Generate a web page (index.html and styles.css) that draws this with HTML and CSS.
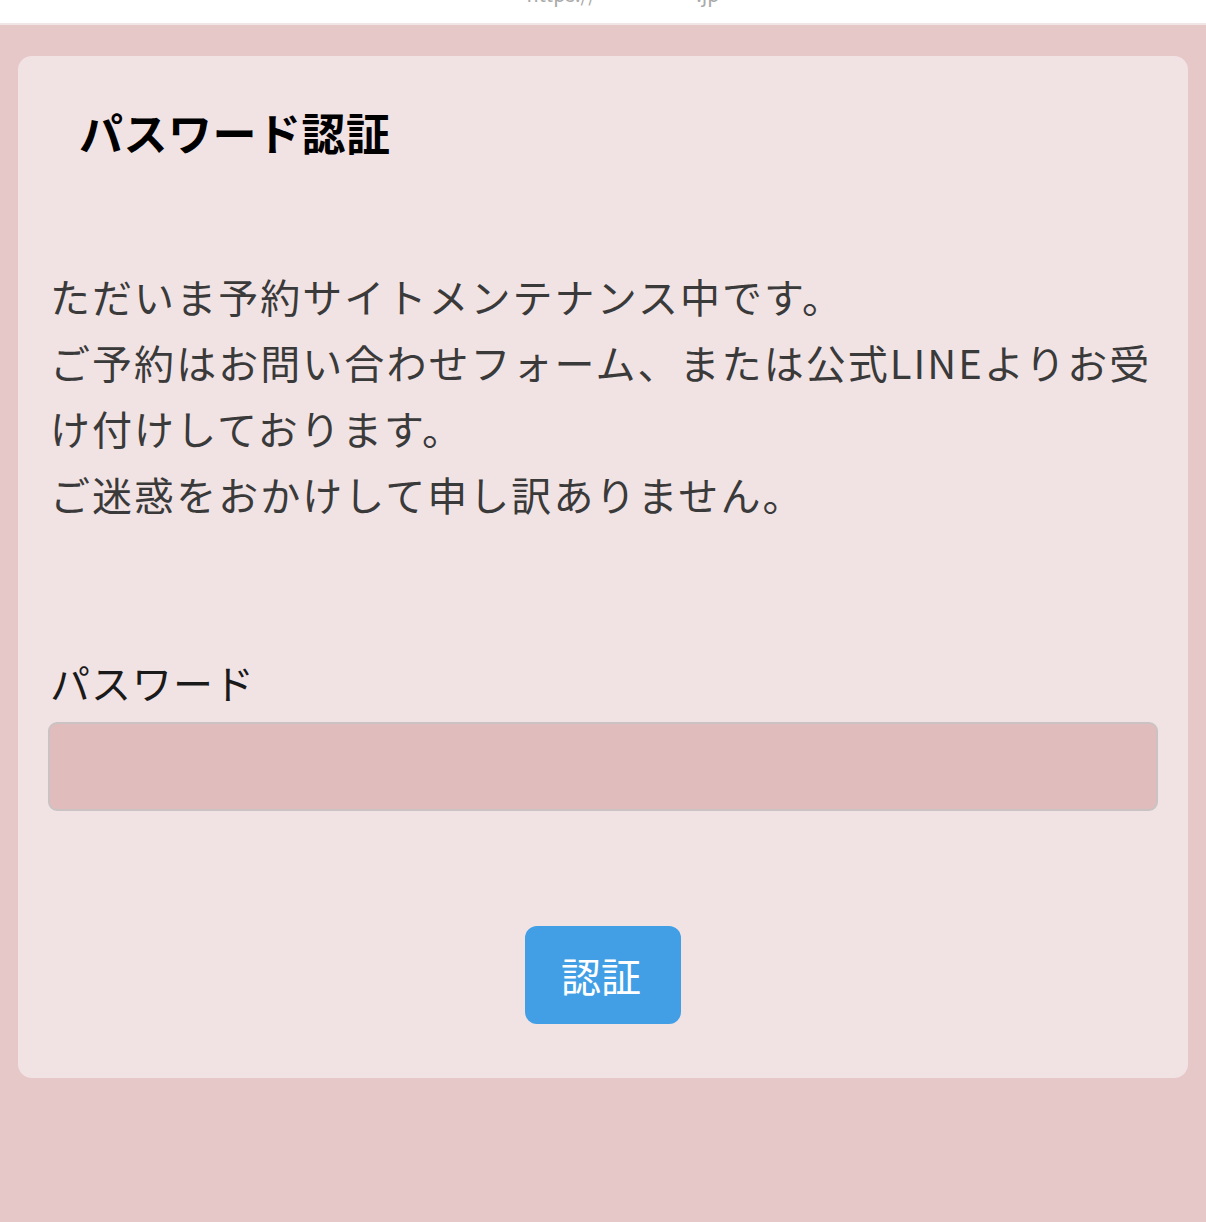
FILE: index.html
```html
<!DOCTYPE html>
<html lang="ja">
<head>
<meta charset="utf-8">
<title>パスワード認証</title>
<link rel="stylesheet" href="styles.css">
</head>
<body>
<div class="topbar"><span class="url">https://・・・・・.jp</span></div>
<main class="page">
  <section class="card">
    <h1 class="title">パスワード認証</h1>
    <p class="message">ただいま予約サイトメンテナンス中です。<br>ご予約はお問い合わせフォーム、または公式LINEよりお受け付けしております。<br>ご迷惑をおかけして申し訳ありません。</p>
    <form class="form">
      <label class="label" for="pw">パスワード</label>
      <input class="input" id="pw" type="password">
      <div class="actions">
        <button class="button" type="button">認証</button>
      </div>
    </form>
  </section>
</main>
</body>
</html>
```

FILE: styles.css
```css
html, body {
  margin: 0;
  padding: 0;
}
body {
  background: #e7c8c9;
  font-family: "Noto Sans CJK JP", "Noto Sans", sans-serif;
  width: 1206px;
  height: 1222px;
  overflow: hidden;
}
.topbar {
  height: 23px;
  background: #ffffff;
  border-bottom: 2px solid #f1e6e6;
  overflow: hidden;
  text-align: center;
  padding-left: 40px;
}
.url {
  display: block;
  font-size: 20px;
  line-height: 20px;
  color: #aaa;
  margin-top: -16px;
}
.page {
  padding: 31px 18px 0 18px;
}
.card {
  background: #f1e3e4;
  border-radius: 14px;
  padding: 46px 30px 54px 32px;
}
.title {
  margin: 0;
  padding-left: 29px;
  font-size: 44px;
  line-height: 60px;
  font-weight: 700;
  color: #000;
  letter-spacing: 0.5px;
}
.message {
  margin: 101px 0 0 0;
  font-size: 40px;
  line-height: 66px;
  letter-spacing: 2.05px;
  color: #3a3a3a;
  font-weight: 400;
}
.form {
  margin-top: 127px;
  display: flex;
  flex-direction: column;
}
.label {
  font-size: 40px;
  line-height: 56px;
  letter-spacing: 1px;
  color: #1a1a1a;
}
.input {
  margin: 12px 0 0 -2px;
  height: 89px;
  box-sizing: border-box;
  background: #e0bcbd;
  border: 2px solid #cbc3c3;
  border-radius: 9px;
  outline: none;
  padding: 0 16px;
}
.actions {
  margin-top: 115px;
  display: flex;
  justify-content: center;
  padding-right: 3px;
}
.button {
  width: 156px;
  height: 98px;
  background: #429fe6;
  color: #fff;
  border: none;
  border-radius: 12px;
  font-family: "Noto Sans CJK JP", "Noto Sans", sans-serif;
  font-size: 40px;
  line-height: 1;
  padding: 0;
  text-indent: -3px;
}
```
